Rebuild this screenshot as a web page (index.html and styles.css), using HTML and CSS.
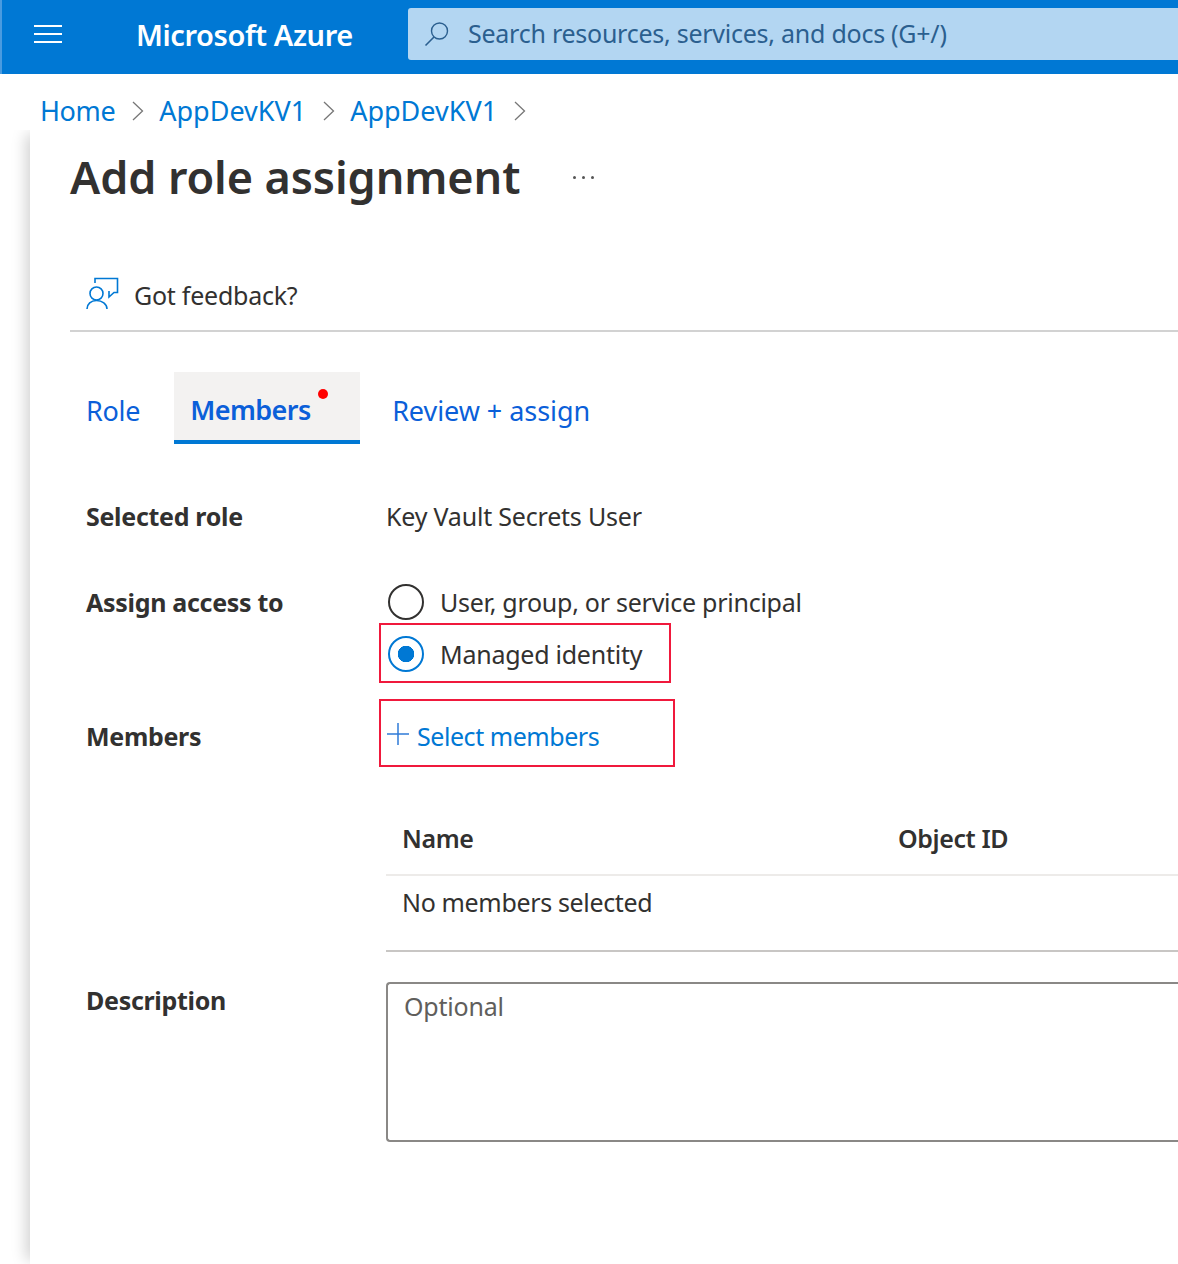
FILE: index.html
```html
<!DOCTYPE html>
<html lang="en">
<head>
<meta charset="utf-8">
<title>Add role assignment</title>
<link rel="stylesheet" href="styles.css">
</head>
<body>
<header class="topbar">
  <button class="menu" aria-label="Menu"><span></span><span></span><span></span></button>
  <div class="brand">Microsoft Azure</div>
  <div class="search">
    <svg class="search-icon" viewBox="0 0 26 26" width="26" height="26"><circle cx="15.5" cy="10" r="8" fill="none" stroke="#2b5f8f" stroke-width="1.4"/><path d="M10 16 L1.5 24.5" stroke="#2b5f8f" stroke-width="1.6" fill="none"/></svg>
    <span class="search-text">Search resources, services, and docs (G+/)</span>
  </div>
</header>
<nav class="crumbs">
  <a>Home</a>
  <svg class="chev" viewBox="0 0 12 20" width="12" height="20"><path d="M1 1 L10.5 10 L1 19" fill="none" stroke="#777" stroke-width="1.3"/></svg>
  <a>AppDevKV1</a>
  <svg class="chev" viewBox="0 0 12 20" width="12" height="20"><path d="M1 1 L10.5 10 L1 19" fill="none" stroke="#777" stroke-width="1.3"/></svg>
  <a>AppDevKV1</a>
  <svg class="chev" viewBox="0 0 12 20" width="12" height="20"><path d="M1 1 L10.5 10 L1 19" fill="none" stroke="#777" stroke-width="1.3"/></svg>
</nav>
<main class="panel">
  <div class="title-row">
    <h1>Add role assignment</h1>
    <span class="more"><i></i><i></i><i></i></span>
  </div>
  <div class="feedback">
    <svg viewBox="0 0 34 34" width="34" height="34"><path d="M9 6 V1.5 H31.5 V15.5 H28 L23 20 V14" fill="none" stroke="#0078d4" stroke-width="1.6"/><circle cx="10.5" cy="16.5" r="6.5" fill="none" stroke="#0078d4" stroke-width="1.6"/><path d="M1 32 C1 27 5 23.5 10.5 23.5 C16 23.5 21 27 21 32" fill="none" stroke="#0078d4" stroke-width="1.6"/></svg>
    <span>Got feedback?</span>
  </div>
  <div class="tabs">
    <div class="tab">Role</div>
    <div class="tab active">Members<span class="dot"></span></div>
    <div class="tab">Review + assign</div>
  </div>
  <div class="form">
    <div class="label row-role">Selected role</div>
    <div class="value row-role">Key Vault Secrets User</div>
    <div class="label row-access">Assign access to</div>
    <div class="radios">
      <div class="radio wide"><span class="circle"></span>User, group, or service principal</div>
      <div class="radio checked"><span class="circle"></span>Managed identity<span class="mark mark-radio"></span></div>
    </div>
    <div class="label row-members">Members</div>
    <div class="select row-members">
      <svg viewBox="0 0 22 22" width="22" height="22"><path d="M11 0 V22 M0 11 H22" stroke="#2f7bd8" stroke-width="1.5" fill="none"/></svg>
      <span>Select members</span>
      <span class="mark mark-select"></span>
    </div>
    <div class="members-table">
      <div class="thead"><div class="col-name">Name</div><div>Object ID</div></div>
      <div class="tbody">No members selected</div>
    </div>
    <div class="label row-desc">Description</div>
    <div class="textarea">Optional</div>
  </div>
</main>
</body>
</html>
```
FILE: styles.css
```css
* { box-sizing: border-box; }
html, body { margin: 0; height: 1264px; overflow: hidden; background: #fff; }
body { font-family: "Noto Sans", "Open Sans", sans-serif; font-size: 25px; color: #323130; }

.topbar { height: 74px; background: #0078d4; border-left: 2px solid #4a9be0; display: flex; align-items: center; color: #fff; }
.menu { width: 28px; height: 18px; margin: 0 0 6px 32px; padding: 0; border: 0; background: none; display: flex; flex-direction: column; justify-content: space-between; }
.menu span { display: block; height: 2px; background: #fff; }
.brand { margin: 0 0 6px 74px; width: 272px; font-size: 29px; font-weight: 600; letter-spacing: -0.4px; }
.search { flex: 1; height: 52px; margin-top: -6px; background: #b3d6f2; border-radius: 3px 0 0 3px; display: flex; align-items: center; padding: 0 0 0 16px; }
.search-icon { margin-top: 0; }
.search-text { margin: 0 0 2px 18px; font-size: 25px; letter-spacing: -0.25px; color: #2b5f8f; }

.crumbs { height: 56px; padding: 16px 0 0 40px; display: flex; align-items: center; color: #0078d4; font-size: 27px; }
.crumbs a:first-child { letter-spacing: -0.4px; }
.chev { margin: 2px 15px 0 17px; }

.panel { margin-left: 30px; height: 1134px; padding-left: 40px; box-shadow: -8px 0 14px -4px rgba(0,0,0,.18); clip-path: inset(0 0 0 -30px); position: relative; }
.title-row { height: 96px; display: flex; align-items: center; padding-bottom: 4px; }
h1 { margin: 0; font-size: 45px; font-weight: 600; letter-spacing: -0.1px; color: #323130; }
.more { margin: 2px 0 0 53px; display: flex; gap: 6px; }
.more i { width: 3px; height: 3px; border-radius: 50%; background: #555; }
.feedback { height: 106px; padding: 42px 0 0 16px; display: flex; align-items: flex-start; border-bottom: 2px solid #d2d2d2; gap: 14px; }
.feedback svg { margin-top: 9px; }
.feedback span { margin-top: 10px; letter-spacing: -0.25px; }

.tabs { display: flex; height: 72px; margin-top: 40px; color: #0b5fd9; font-size: 27px; }
.tab { padding: 4px 16px 0; display: flex; align-items: center; letter-spacing: -0.05px; }
.tab:first-child { letter-spacing: -0.3px; }
.tab.active { background: #f3f2f1; border-bottom: 4px solid #0078d4; font-weight: 600; width: 186px; margin: 0 16px 0 18px; position: relative; padding-top: 7px; letter-spacing: -0.55px; }
.dot { position: absolute; left: 144px; top: 17px; width: 10px; height: 10px; border-radius: 50%; background: #f00; }

.form { display: grid; grid-template-columns: 300px 1fr; padding-left: 16px; margin-top: 55px; }
.label { font-weight: 700; letter-spacing: -0.3px; font-size: 25px; line-height: 34px; }
.value { letter-spacing: -0.2px; line-height: 34px; }
.label.row-access { margin-top: 52px; }
.radios { margin-top: 43px; }
.radio { position: relative; display: flex; align-items: center; height: 52px; letter-spacing: -0.25px; }
.radio.wide { letter-spacing: -0.26px; }
.circle { width: 36px; height: 36px; margin: 0 16px 0 2px; border: 2px solid #323130; border-radius: 50%; }
.checked .circle { border-color: #0078d4; background: radial-gradient(circle, #0078d4 0 8px, transparent 8.5px); }
.row-members { margin-top: 39px; }
.select { position: relative; display: flex; align-items: center; gap: 8px; color: #0078d4; letter-spacing: -0.45px; height: 34px; }
.select svg { margin: 0 0 4px 1px; }
.mark { position: absolute; border: 2px solid #f0193c; pointer-events: none; }
.mark-radio { left: -7px; top: -5px; width: 292px; height: 60px; }
.mark-select { left: -7px; top: -20px; width: 296px; height: 68px; }
.members-table { grid-column: 2; margin-top: 50px; }
.thead { display: flex; height: 73px; align-items: center; padding: 0 0 2px 16px; font-weight: 600; letter-spacing: -0.4px; border-bottom: 2px solid #edebe9; }
.col-name { width: 496px; }
.tbody { height: 76px; padding: 9px 0 0 16px; line-height: 34px; border-bottom: 2px solid #c8c6c4; letter-spacing: -0.35px; }
.label.row-desc { margin-top: 31px; }
.textarea { margin-top: 30px; height: 160px; border: 2px solid #8a8886; border-right: 0; border-radius: 4px 0 0 4px; padding: 5px 16px; color: #605e5c; letter-spacing: -0.2px; }
```
